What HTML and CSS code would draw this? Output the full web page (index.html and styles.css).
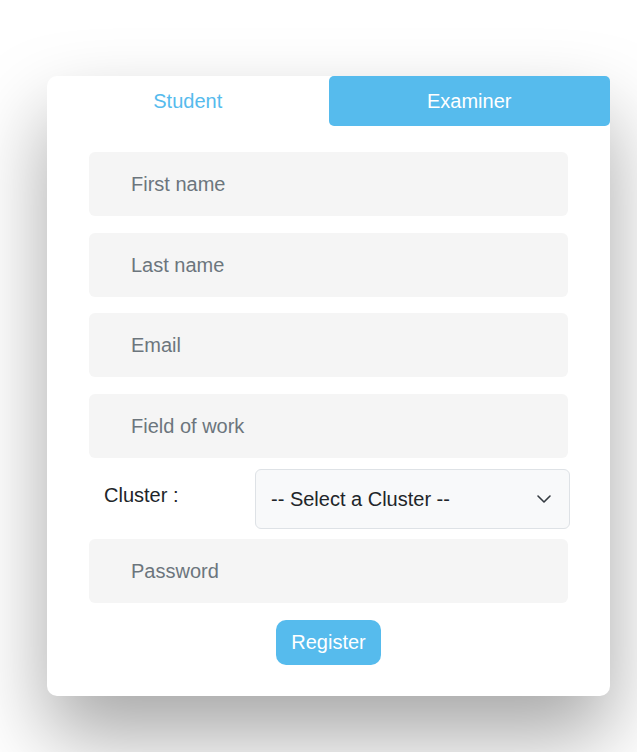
FILE: index.html
```html
<!DOCTYPE html>
<html>
<head>
<meta charset="utf-8">
<link rel="stylesheet" href="styles.css">
</head>
<body>
<div class="card">
  <div class="tabs">
    <div class="tab">Student</div>
    <div class="tab active">Examiner</div>
  </div>
  <form class="form">
    <input class="field f1" type="text" placeholder="First name">
    <input class="field f2" type="text" placeholder="Last name">
    <input class="field f3" type="email" placeholder="Email">
    <input class="field f4" type="text" placeholder="Field of work">
    <div class="cluster-row">
      <label class="cluster-label">Cluster :</label>
      <div class="select-wrap">
        <select class="select">
          <option>-- Select a Cluster --</option>
        </select>
        <svg class="chevron" width="16" height="16" viewBox="0 0 16 16"><path d="M2 5l6 6 6-6" fill="none" stroke="#343a40" stroke-width="1.6" stroke-linecap="round" stroke-linejoin="round"/></svg>
      </div>
    </div>
    <input class="field pw" type="password" placeholder="Password">
    <div class="actions">
      <button type="button" class="btn">Register</button>
    </div>
  </form>
</div>
</body>
</html>
```
FILE: styles.css
```css
* { box-sizing: border-box; }
html, body { margin: 0; padding: 0; background: #fff; }
body {
  font-family: "Liberation Sans", Arial, sans-serif;
  padding: 76px 0 0 47px;
  height: 752px;
  overflow: hidden;
}
.card {
  width: 563px;
  background: #fff;
  border-radius: 10px;
  box-shadow: 0 40px 80px rgba(0,0,0,0.35);
  padding-bottom: 31px;
}
.tabs { display: flex; height: 50px; }
.tab {
  flex: 1;
  display: flex;
  align-items: center;
  justify-content: center;
  font-size: 20px;
  color: #56bbed;
  border-radius: 5px;
}
.tab.active { background: #56bbed; color: #fff; }
.form {
  display: flex;
  flex-direction: column;
  padding: 26px 42px 0 42px;
}
.field {
  height: 64px;
  border: none;
  background: #f5f5f5;
  border-radius: 6px;
  padding: 0 0 0 42px;
  font-family: inherit;
  font-size: 20px;
  color: #212529;
  outline: none;
}
.f1 { margin-bottom: 17px; }
.f2 { margin-bottom: 16px; }
.f3 { margin-bottom: 17px; }
.f4 { margin-bottom: 11px; }
.field::placeholder { color: #6c757d; }
.cluster-row {
  display: flex;
  align-items: flex-start;
  margin-right: -2px;
  margin-bottom: 10px;
}
.cluster-label {
  width: 166px;
  padding: 15px 0 0 15px;
  font-size: 20px;
  color: #212529;
}
.select-wrap { position: relative; flex: 1; }
.select {
  width: 100%;
  height: 60px;
  appearance: none;
  -webkit-appearance: none;
  background: #f8f9fa;
  border: 1px solid #dee2e6;
  border-radius: 6px;
  padding: 0 40px 0 15px;
  font-family: inherit;
  font-size: 20px;
  color: #212529;
}
.chevron { position: absolute; right: 18px; top: 22px; pointer-events: none; }
.field.pw { margin-bottom: 17px; }
.actions { display: flex; justify-content: center; }
.btn {
  height: 45px;
  padding: 0 15.5px;
  border: none;
  border-radius: 10px;
  background: #56bbed;
  color: #fff;
  font-family: inherit;
  font-size: 20px;
}
```
